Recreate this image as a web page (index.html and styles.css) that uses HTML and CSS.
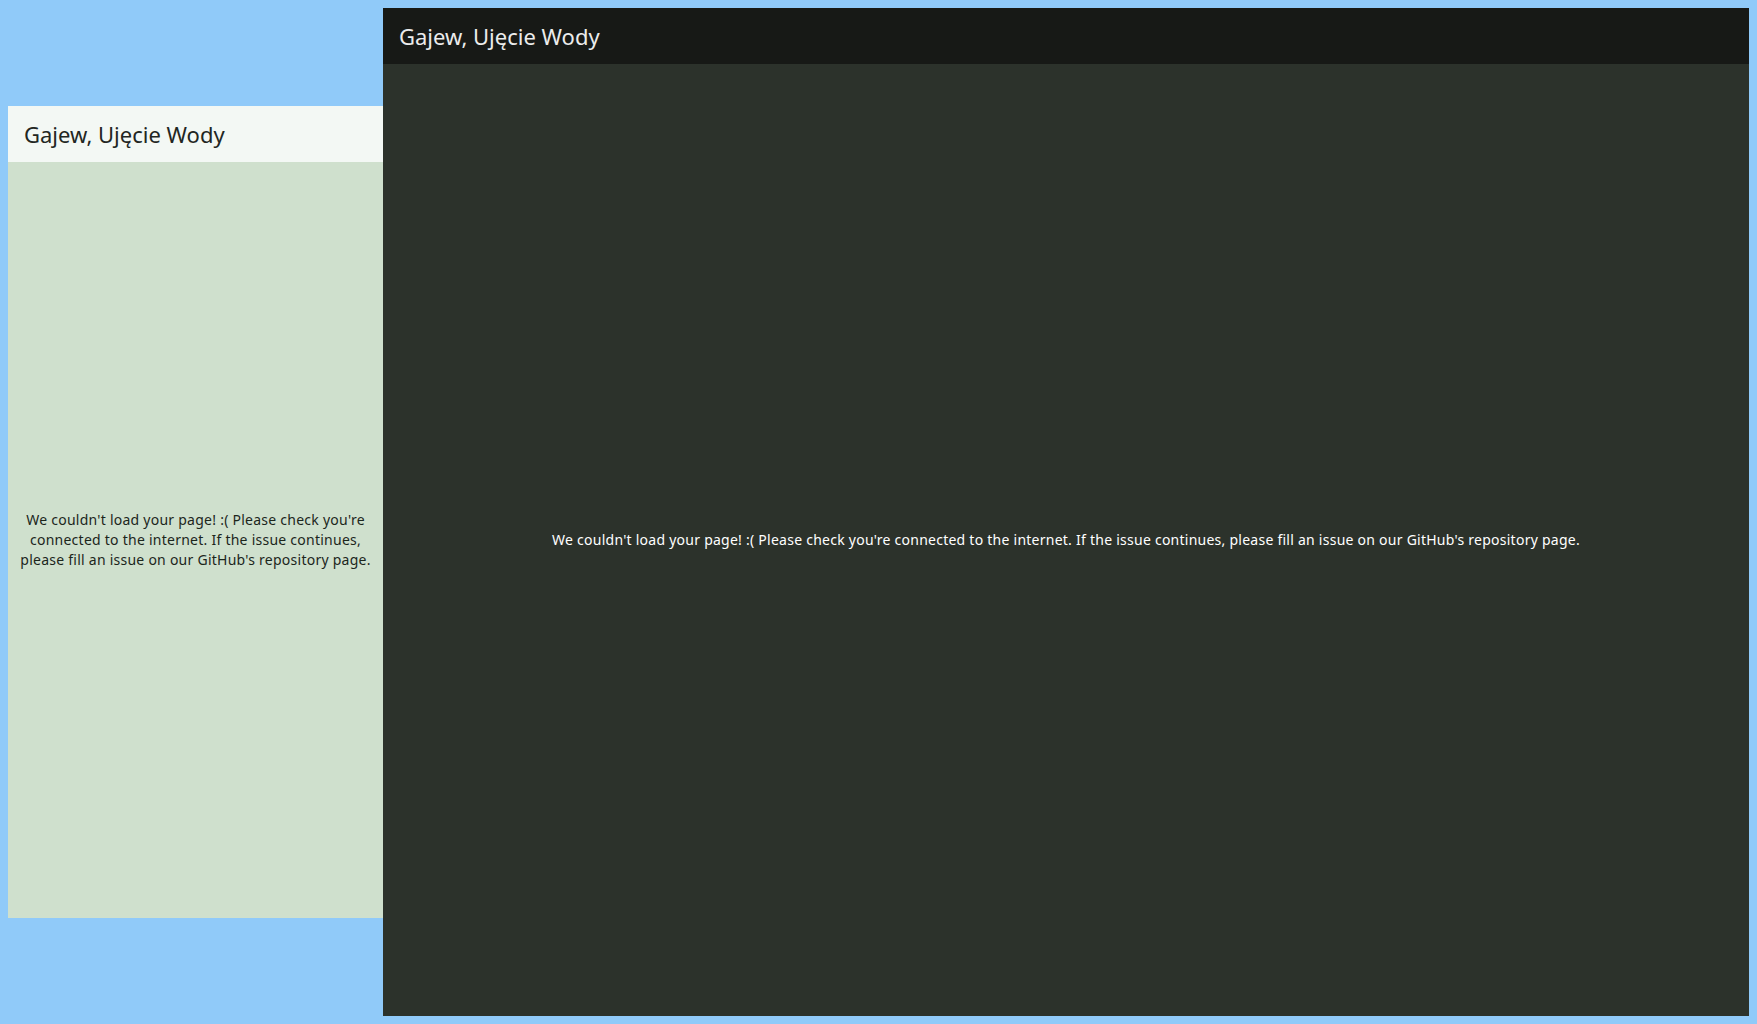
FILE: index.html
```html
<!DOCTYPE html>
<html lang="pl">
<head>
<meta charset="utf-8">
<title>Gajew, Ujęcie Wody</title>
<link rel="stylesheet" href="styles.css">
</head>
<body>
<div class="layout">
  <section class="panel panel-light">
    <header class="panel-header"><h1 class="panel-title">Gajew, Ujęcie Wody</h1></header>
    <div class="panel-body"><p class="message">We couldn't load your page! :( Please check you're connected to the internet. If the issue continues, please fill an issue on our GitHub's repository page.</p></div>
  </section>
  <section class="panel panel-dark">
    <header class="panel-header"><h1 class="panel-title">Gajew, Ujęcie Wody</h1></header>
    <div class="panel-body"><p class="message">We couldn't load your page! :( Please check you're connected to the internet. If the issue continues, please fill an issue on our GitHub's repository page.</p></div>
  </section>
</div>
</body>
</html>
```

FILE: styles.css
```css
html, body {
  height: 100%;
}
body {
  margin: 0;
  padding: 8px;
  box-sizing: border-box;
  background: #90caf9;
  font-family: "Noto Sans", "Open Sans", sans-serif;
}
.layout {
  display: flex;
  align-items: center;
  height: 100%;
}
.panel {
  display: flex;
  flex-direction: column;
}
.panel-light {
  width: 375px;
  height: 812px;
  background: #cfe0cd;
  color: #1c261c;
}
.panel-dark {
  flex: 1;
  height: 100%;
  background: #2c322b;
  color: #ffffff;
}
.panel-header {
  height: 56px;
  flex: 0 0 56px;
  display: flex;
  align-items: center;
  padding: 0 16px;
}
.panel-light .panel-header {
  background: #f3f8f4;
  color: #222622;
}
.panel-dark .panel-header {
  background: #171916;
  color: #ececec;
}
.panel-title {
  margin: 0;
  font-size: 22px;
  font-weight: 400;
}
.panel-body {
  flex: 1;
  display: flex;
  align-items: center;
  justify-content: center;
  padding: 0 10px;
}
.message {
  margin: 0;
  font-size: 14px;
  line-height: 20px;
  letter-spacing: 0.25px;
  text-align: center;
}
```
